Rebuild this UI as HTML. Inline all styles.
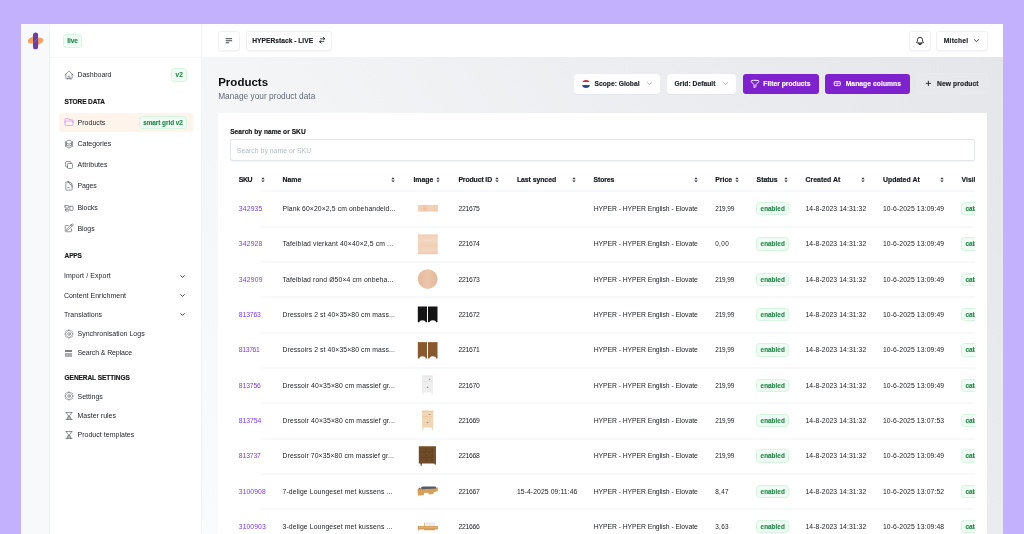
<!DOCTYPE html>
<html lang="en"><head><meta charset="utf-8"><title>Products</title>
<style>
*{box-sizing:border-box;margin:0;padding:0}
html,body{width:1024px;height:534px;overflow:hidden}
body{background:#c4b1fe;font-family:"Liberation Sans",sans-serif;color:#1f2328;position:relative;font-size:6.8px;line-height:1}
.abs,.app div,.app svg{position:absolute}
.app{position:absolute;left:21px;top:24px;width:982px;height:510px;background:#fff;overflow:hidden}
/* coordinates inside .page are page coordinates */
.page{left:-21px;top:-24px;width:1024px;height:534px;will-change:transform}
.rail{left:21px;top:24px;width:29px;height:510px;background:#f8f9fb;border-right:1px solid #f1f2f5}
.side{left:50px;top:24px;width:151.5px;height:510px;background:#fff;border-right:1px solid #f1f2f4}
.sidehead{left:50px;top:24px;width:151px;height:33.5px;border-bottom:1px solid #f5f6f7}
.top{left:201.5px;top:24px;width:802px;height:33px;background:#fff}
.main{left:201.5px;top:57px;width:802px;height:477px;background:linear-gradient(58deg,#fafbfc 0%,#e5e6ea 100%)}
.card{left:217.5px;top:112.5px;width:769.5px;height:440px;background:#fff;border-radius:2px}
.btn{background:#fff;border:1px solid #f0f1f4;border-radius:3px;height:19.5px;top:31px;box-shadow:0 0.5px 1px rgba(0,0,0,.03)}
.ab{border-color:#fdfdfe}
.btxt{-webkit-text-stroke:.15px;font-weight:bold;font-size:6.7px;color:#1c1f24;white-space:nowrap;line-height:8px}
.nav{font-size:7px;color:#24272d;white-space:nowrap;line-height:9px;left:77.5px}
.sec{-webkit-text-stroke:.15px;font-size:6.5px;font-weight:bold;color:#15171a;white-space:nowrap;line-height:8px;left:64.6px;letter-spacing:.05px}
.ico{left:63.7px;width:10px;height:10px}
.ico path,.ico rect,.ico circle{fill:none;stroke:#4d5158;stroke-width:1.45;stroke-linecap:round;stroke-linejoin:round}
.chev{left:178.7px;width:7px;height:7px}
.gb{-webkit-text-stroke:.12px;background:#effcf4;border:1px solid #d6f5e0;border-radius:3.5px;color:#25864a;font-weight:bold;white-space:nowrap;text-align:center}
.th{top:175.9px;-webkit-text-stroke:.18px #17191d;font-weight:bold;font-size:6.9px;line-height:8px;color:#17191d;white-space:nowrap}
.sw{top:175.6px;width:4px;height:8px}
.so{left:0;top:0;width:4px;height:8px}
.tbl{left:230px;top:165px;width:744.7px;height:380px;overflow:hidden}
.tin{left:-230px;top:-165px;width:1024px;height:600px}
.tr{left:0;width:1024px;height:35.3px}
.ln{left:258px;top:-0.9px;width:720px;height:2px;background:linear-gradient(to right,rgba(247,248,250,0),#f7f8fa 8px)}
.td{top:13.7px;font-size:6.8px;line-height:8px;color:#1b1d21;white-space:nowrap}
.td.sku{color:#7c3aed}
.td.pr{font-size:6.4px}
.pi{left:412px;top:0;width:32px;height:35.3px}
.bd{-webkit-text-stroke:.12px;top:10.6px;height:13.6px;background:#effcf4;border:1px solid #d6f5e0;border-radius:3.5px;color:#25864a;font-weight:bold;font-size:6.3px;line-height:11.7px;white-space:nowrap;padding:0 3.3px}
</style></head>
<body>
<div class="app"><div class="page">
<div class="rail"></div>
<div class="side"></div>
<div class="sidehead"></div>
<div class="top"></div>
<div class="main"></div>

<!-- logo -->
<svg style="left:24px;top:28px;width:24px;height:26px" viewBox="24 28 24 26">
<path d="M33.6 35.9 L29.3 38.45 A2.7 2.7 0 0 0 30.4 43.6 L33.6 43.5 Z" fill="#f6a264"></path>
<path d="M37.5 45.3 L41.8 42.7 A2.65 2.65 0 0 0 40.7 37.65 L37.5 37.75 Z" fill="#f6a264"></path>
<rect x="33" y="32.5" width="5.1" height="16.7" rx="2.55" fill="#6c3e9f"></rect>
<path d="M33.5 43.1 L37.7 38.4" stroke="#fff" stroke-opacity=".38" stroke-width=".55" fill="none"></path>
</svg>

<!-- sidebar -->
<div class="gb" style="left: 63.1px; top: 34.1px; width: 18.9px; height: 13.6px; font-size: 6.6px; line-height: 11.5px; letter-spacing: -0.075px;">live</div>

<svg class="ico" style="top:69.75px" viewBox="0 0 24 24"><path d="m2.25 12 8.954-8.955c.44-.439 1.152-.439 1.591 0L21.75 12M4.5 9.75v10.125c0 .621.504 1.125 1.125 1.125H9.75v-4.875c0-.621.504-1.125 1.125-1.125h2.25c.621 0 1.125.504 1.125 1.125V21h4.125c.621 0 1.125-.504 1.125-1.125V9.750M8.25 21h8.25"></path></svg>
<div class="nav" style="top: 69.9px; letter-spacing: -0.039px;">Dashboard</div>
<div class="gb" style="left: 171.2px; top: 68px; width: 16px; height: 13.7px; font-size: 6.4px; line-height: 11.5px; letter-spacing: 0.195px;">v2</div>

<div class="sec" style="top: 98px; letter-spacing: -0.097px;">STORE DATA</div>

<div style="left:58.5px;top:113px;width:134px;height:18.7px;background:#fef4ec;border-radius:3px"></div>
<svg class="ico" style="top:117.3px" viewBox="0 0 24 24"><path style="stroke:#c084fc" d="M2.25 12.75V12A2.25 2.25 0 0 1 4.5 9.75h15A2.25 2.25 0 0 1 21.75 12v.75m-8.69-6.440-2.120-2.120a1.5 1.5 0 0 0-1.061-.44H4.5A2.25 2.25 0 0 0 2.25 6v12a2.25 2.25 0 0 0 2.25 2.25h15A2.25 2.25 0 0 0 21.75 18V9a2.25 2.25 0 0 0-2.25-2.25h-5.379a1.5 1.5 0 0 1-1.060-.44Z"></path></svg>
<div class="nav" style="top: 117.6px; letter-spacing: 0.034px;">Products</div>
<div class="gb" style="left: 138.8px; top: 115.8px; width: 48.4px; height: 13.5px; font-size: 6.4px; line-height: 11.5px; letter-spacing: -0.042px;">smart grid v2</div>

<svg class="ico" style="top:138.55px" viewBox="0 0 24 24"><path d="M6.429 9.75 2.25 12l4.179 2.25m0-4.5 5.571 3 5.571-3m-11.142 0L2.25 7.5 12 2.25l9.75 5.25-4.179 2.25m0 0L21.75 12l-4.179 2.25m0 0 4.179 2.25L12 21.75 2.25 16.5l4.179-2.25m11.142 0-5.571 3-5.571-3"></path></svg>
<div class="nav" style="top: 138.9px; letter-spacing: -0.016px;">Categories</div>
<svg class="ico" style="top:159.5px" viewBox="0 0 24 24"><path d="M16.5 8.25V6a2.25 2.25 0 0 0-2.25-2.25H6A2.25 2.25 0 0 0 3.75 6v8.25A2.25 2.25 0 0 0 6 16.5h2.25m8.25-8.25H18a2.25 2.25 0 0 1 2.25 2.25V18A2.25 2.25 0 0 1 18 20.25h-7.5A2.25 2.25 0 0 1 8.25 18v-1.5m8.25-8.25h-6a2.25 2.25 0 0 0-2.25 2.25v6"></path></svg>
<div class="nav" style="top: 160.1px; letter-spacing: 0.052px;">Attributes</div>
<svg class="ico" style="top:181px" viewBox="0 0 24 24"><path d="M19.5 14.25v-2.625a3.375 3.375 0 0 0-3.375-3.375h-1.5A1.125 1.125 0 0 1 13.5 7.125v-1.5a3.375 3.375 0 0 0-3.375-3.375H8.25m4.5 13.5H9m1.5-13.5H5.625c-.621 0-1.125.504-1.125 1.125v17.25c0 .621.504 1.125 1.125 1.125h12.75c.621 0 1.125-.504 1.125-1.125V11.25a9 9 0 0 0-9-9Z"></path></svg>
<div class="nav" style="top: 181.4px; letter-spacing: -0.152px;">Pages</div>
<svg class="ico" style="top:202.8px" viewBox="0 0 24 24"><path d="M2.25 7.125C2.25 6.504 2.754 6 3.375 6h6c.621 0 1.125.504 1.125 1.125v3.75c0 .621-.504 1.125-1.125 1.125h-6a1.125 1.125 0 0 1-1.125-1.125v-3.75ZM14.25 8.625c0-.621.504-1.125 1.125-1.125h5.250c.621 0 1.125.504 1.125 1.125v8.25c0 .621-.504 1.125-1.125 1.125h-5.250a1.125 1.125 0 0 1-1.125-1.125v-8.25ZM3.75 16.125c0-.621.504-1.125 1.125-1.125h5.250c.621 0 1.125.504 1.125 1.125v2.25c0 .621-.504 1.125-1.125 1.125h-5.250a1.125 1.125 0 0 1-1.125-1.125v-2.25Z"></path></svg>
<div class="nav" style="top: 202.7px; letter-spacing: -0.071px;">Blocks</div>
<svg class="ico" style="top:223.35px" viewBox="0 0 24 24"><path d="m16.862 4.487 1.687-1.688a1.875 1.875 0 1 1 2.652 2.652L10.582 16.070a4.5 4.5 0 0 1-1.897 1.130L6 18l.8-2.685a4.5 4.5 0 0 1 1.130-1.897l8.932-8.931Zm0 0L19.5 7.125M18 14v4.750A2.250 2.250 0 0 1 15.750 21H5.250A2.250 2.250 0 0 1 3 18.750V8.250A2.250 2.250 0 0 1 5.250 6H10"></path></svg>
<div class="nav" style="top: 223.9px; letter-spacing: -0.083px;">Blogs</div>

<div class="sec" style="top: 251.5px; letter-spacing: -0.127px;">APPS</div>
<div class="nav" style="left: 63.9px; top: 271.4px; letter-spacing: 0.066px;">Import / Export</div>
<svg class="chev" style="top:272.6px" viewBox="0 0 14 14"><path d="M3.5 5.3 L7 8.8 L10.5 5.3" fill="none" stroke="#22252a" stroke-width="1.8" stroke-linecap="round" stroke-linejoin="round"></path></svg>
<div class="nav" style="left: 63.9px; top: 290.6px; letter-spacing: 0.013px;">Content Enrichment</div>
<svg class="chev" style="top:291.8px" viewBox="0 0 14 14"><path d="M3.5 5.3 L7 8.8 L10.5 5.3" fill="none" stroke="#22252a" stroke-width="1.8" stroke-linecap="round" stroke-linejoin="round"></path></svg>
<div class="nav" style="left: 63.9px; top: 309.7px; letter-spacing: 0.027px;">Translations</div>
<svg class="chev" style="top:310.9px" viewBox="0 0 14 14"><path d="M3.5 5.3 L7 8.8 L10.5 5.3" fill="none" stroke="#22252a" stroke-width="1.8" stroke-linecap="round" stroke-linejoin="round"></path></svg>

<svg class="ico" style="top:328.85px" viewBox="0 0 24 24"><path d="M10.33 2.44 L13.67 2.44 L14.06 4.48 L15.86 5.22 L17.58 4.06 L19.94 6.42 L18.78 8.14 L19.52 9.94 L21.56 10.33 L21.56 13.67 L19.52 14.06 L18.78 15.86 L19.94 17.58 L17.58 19.94 L15.86 18.78 L14.06 19.52 L13.67 21.56 L10.33 21.56 L9.94 19.52 L8.14 18.78 L6.42 19.94 L4.06 17.58 L5.22 15.86 L4.48 14.06 L2.44 13.67 L2.44 10.33 L4.48 9.94 L5.22 8.14 L4.06 6.42 L6.42 4.06 L8.14 5.22 L9.94 4.48 Z"></path><circle cx="12" cy="12" r="3.1"></circle></svg>
<div class="nav" style="top: 329.1px; letter-spacing: 0.013px;">Synchronisation Logs</div>
<div style="left:64.9px;top:349.6px;width:7.2px;height:2.2px;background:#7e8084"></div><div style="left:64.9px;top:352.8px;width:7.2px;height:1.9px;background:#a9abae"></div><div style="left:64.9px;top:355.1px;width:7.2px;height:1.9px;background:#adafb2"></div>
<div class="nav" style="top: 348.2px; letter-spacing: -0.12px;">Search &amp; Replace</div>

<div class="sec" style="top: 373.5px; letter-spacing: -0.049px;">GENERAL SETTINGS</div>
<svg class="ico" style="top:391.3px" viewBox="0 0 24 24"><path d="M10.33 2.44 L13.67 2.44 L14.06 4.48 L15.86 5.22 L17.58 4.06 L19.94 6.42 L18.78 8.14 L19.52 9.94 L21.56 10.33 L21.56 13.67 L19.52 14.06 L18.78 15.86 L19.94 17.58 L17.58 19.94 L15.86 18.78 L14.06 19.52 L13.67 21.56 L10.33 21.56 L9.94 19.52 L8.14 18.78 L6.42 19.94 L4.06 17.58 L5.22 15.86 L4.48 14.06 L2.44 13.67 L2.44 10.33 L4.48 9.94 L5.22 8.14 L4.06 6.42 L6.42 4.06 L8.14 5.22 L9.94 4.48 Z"></path><circle cx="12" cy="12" r="3.1"></circle></svg>
<div class="nav" style="top: 391.7px; letter-spacing: 0px;">Settings</div>
<svg class="ico" style="top:410.75px" viewBox="0 0 24 24"><path d="M6.5 20.2 L9.3 14.6 H14.7 L17.5 20.2 Z" style="fill:#b9bbbf;stroke:none"></path><path d="M4.5 3.75 H19.5 M6.2 3.75 C6.2 8.6 9.4 10.4 12 12 C14.6 10.4 17.8 8.6 17.8 3.75 M4.5 20.25 H19.5 M6.6 20.25 L10 13.4 M17.4 20.25 L14 13.4 M10 13.4 L12 12 L14 13.4"></path></svg>
<div class="nav" style="top: 410.9px; letter-spacing: -0.001px;">Master rules</div>
<svg class="ico" style="top:429.95px" viewBox="0 0 24 24"><path d="M6.5 20.2 L9.3 14.6 H14.7 L17.5 20.2 Z" style="fill:#b9bbbf;stroke:none"></path><path d="M4.5 3.75 H19.5 M6.2 3.75 C6.2 8.6 9.4 10.4 12 12 C14.6 10.4 17.8 8.6 17.8 3.75 M4.5 20.25 H19.5 M6.6 20.25 L10 13.4 M17.4 20.25 L14 13.4 M10 13.4 L12 12 L14 13.4"></path></svg>
<div class="nav" style="top: 430px; letter-spacing: 0.022px;">Product templates</div>

<!-- top bar -->
<div class="btn" style="left:218px;width:21.5px"></div>
<svg style="left:225px;top:37px;width:8px;height:7px" viewBox="0 0 8 7"><path d="M0.7 1.7 H7.1 M0.7 3.75 H7.1 M0.7 5.8 H4.1" fill="none" stroke="#3a3d43" stroke-width=".95"></path></svg>
<div class="btn" style="left:245.6px;width:86.9px"></div>
<div class="btxt" style="left: 252.3px; top: 36.8px; letter-spacing: -0.009px;">HYPERstack - LIVE</div>
<svg style="left:317.8px;top:36px;width:8.4px;height:8.4px" viewBox="0 0 24 24"><path d="M7 8 H19 M15.5 4 L19.5 8 M17 16 H5 M8.5 20 L4.5 16 M15.5 4 L19.5 8 L15.5 11 M8.5 13 L4.5 16 L8.5 20" fill="none" stroke="#1c1f24" stroke-width="2.2" stroke-linecap="round" stroke-linejoin="round"></path></svg>

<div class="btn" style="left:909px;width:21.5px"></div>
<svg style="left:914.5px;top:35.7px;width:10px;height:10px" viewBox="0 0 24 24"><path d="M14.857 17.082a23.848 23.848 0 0 0 5.454-1.31A8.967 8.967 0 0 1 18 9.75V9A6 6 0 0 0 6 9v.75a8.967 8.967 0 0 1-2.312 6.022c1.733.64 3.56 1.085 5.455 1.31m5.714 0a24.255 24.255 0 0 1-5.714 0m5.714 0a3 3 0 1 1-5.714 0" fill="none" stroke="#15171a" stroke-width="2.1" stroke-linejoin="round" stroke-linecap="round"></path></svg>
<div class="btn" style="left:936.3px;width:51.3px"></div>
<div class="btxt" style="left: 943.8px; top: 36.8px; letter-spacing: 0.208px;">Mitchel</div>
<svg style="left:973.4px;top:37px;width:7px;height:7px" viewBox="0 0 14 14"><path d="M2.6 5.2 L7 9.3 L11.4 5.2" fill="none" stroke="#2c2f35" stroke-width="1.8" stroke-linecap="round" stroke-linejoin="round"></path></svg>

<!-- title -->
<div style="left: 218.2px; top: 76px; font-size: 11.5px; line-height: 13px; font-weight: bold; color: rgb(11, 12, 14); white-space: nowrap; letter-spacing: 0.006px;">Products</div>
<div style="left: 218.2px; top: 90.8px; font-size: 8.3px; line-height: 10px; color: rgb(100, 107, 120); white-space: nowrap; letter-spacing: 0.009px;">Manage your product data</div>

<!-- actions -->
<div class="btn ab" style="left:574.4px;top:73.6px;width:85.8px;height:20px"></div>
<div style="left:582.3px;top:79.7px;width:8px;height:8px;border-radius:50%;overflow:hidden;background:#fff">
<div style="left:0;top:0;width:8px;height:2.8px;background:#c8313e"></div>
<div style="left:0;top:5.2px;width:8px;height:2.8px;background:#2d4b8f"></div></div>
<div class="btxt" style="left: 594.6px; top: 79.9px; letter-spacing: -0.005px;">Scope: Global</div>
<svg style="left:645.6px;top:80.3px;width:7px;height:7px" viewBox="0 0 14 14"><path d="M3 5.3 L7 9 L11 5.3" fill="none" stroke="#8a8f98" stroke-width="1.4" stroke-linecap="round" stroke-linejoin="round"></path></svg>

<div class="btn ab" style="left:666.6px;top:73.6px;width:69.7px;height:20px"></div>
<div class="btxt" style="left: 674.6px; top: 79.9px; letter-spacing: 0.031px;">Grid: Default</div>
<svg style="left:721.9px;top:80.3px;width:7px;height:7px" viewBox="0 0 14 14"><path d="M3 5.3 L7 9 L11 5.3" fill="none" stroke="#8a8f98" stroke-width="1.4" stroke-linecap="round" stroke-linejoin="round"></path></svg>

<div style="left:742.8px;top:73.6px;width:76px;height:20.3px;background:#7e22ce;border-radius:3px"></div>
<svg style="left:750.1px;top:78.7px;width:10px;height:10px" viewBox="0 0 24 24"><path d="M12 3c2.755 0 5.455.232 8.083.678.533.09.917.556.917 1.096v1.044a2.25 2.25 0 0 1-.659 1.591l-5.432 5.432a2.25 2.25 0 0 0-.659 1.591v2.927a2.25 2.25 0 0 1-1.244 2.013L9.75 21v-6.568a2.25 2.25 0 0 0-.659-1.591L3.659 7.409A2.25 2.25 0 0 1 3 5.818V4.774c0-.54.384-1.006.917-1.096A48.32 48.32 0 0 1 12 3Z" fill="none" stroke="#fff" stroke-width="2.3" stroke-linejoin="round"></path></svg>
<div class="btxt" style="left: 763.3px; top: 79.9px; color: rgb(255, 255, 255); letter-spacing: 0.025px;">Filter products</div>

<div style="left:825px;top:73.6px;width:85px;height:20.3px;background:#7e22ce;border-radius:3px"></div>
<svg style="left:832px;top:79px;width:10px;height:10px" viewBox="832 79 10 10"><rect x="834.2" y="81.5" width="6.1" height="4.1" rx=".7" fill="none" stroke="#fff" stroke-width=".85"></rect><path d="M834.2 83.1 H840.3 M837.25 83.1 V85.6" stroke="#fff" stroke-width=".7" fill="none"></path></svg>
<div class="btxt" style="left: 845.7px; top: 79.9px; color: rgb(255, 255, 255); letter-spacing: 0.081px;">Manage columns</div>

<div style="left:916.6px;top:73.3px;width:71px;height:20.4px;background:rgba(255,255,255,.07);border:1px solid rgba(255,255,255,.08);border-radius:3px"></div>
<svg style="left:925.4px;top:80.1px;width:6.8px;height:6.8px" viewBox="0 0 12 12"><path d="M6 1.4 V10.6 M1.4 6 H10.6" stroke="#1c1f24" stroke-width="1.55" fill="none"></path></svg>
<div class="btxt" style="left: 937px; top: 79.9px; letter-spacing: 0.109px;">New product</div>

<!-- card -->
<div class="card"></div>
<div style="left: 230.2px; top: 127.7px; font-size: 6.6px; line-height: 8px; font-weight: bold; -webkit-text-stroke: 0.15px; color: rgb(19, 21, 24); white-space: nowrap; letter-spacing: 0.035px;">Search by name or SKU</div>
<div style="left:230.3px;top:139.2px;width:744.4px;height:21.7px;border:1px solid #e3e6ea;border-radius:2.5px;background:#fff;box-shadow:0 .5px 1px rgba(0,0,0,.05)"></div>
<div style="left: 236.8px; top: 147px; font-size: 6.8px; line-height: 8px; color: rgb(178, 185, 198); white-space: nowrap; letter-spacing: 0.048px;">Search by name or SKU</div>

<div class="tbl"><div class="tin">
<div class="th" style="left: 238.8px; letter-spacing: -0.421px;">SKU</div><div class="sw" style="left:260.9px"><svg class="so" viewBox="0 0 4 8"><path d="M0.35 3.2 L2 1.25 L3.65 3.2 Z M0.35 4.4 L2 6.35 L3.65 4.4 Z" fill="#2e3136"></path></svg></div><div class="th" style="left: 282.5px; letter-spacing: 0.005px;">Name</div><div class="sw" style="left:391.0px"><svg class="so" viewBox="0 0 4 8"><path d="M0.35 3.2 L2 1.25 L3.65 3.2 Z M0.35 4.4 L2 6.35 L3.65 4.4 Z" fill="#2e3136"></path></svg></div><div class="th" style="left: 413.4px; letter-spacing: -0.004px;">Image</div><div class="sw" style="left:436.0px"><svg class="so" viewBox="0 0 4 8"><path d="M0.35 3.2 L2 1.25 L3.65 3.2 Z M0.35 4.4 L2 6.35 L3.65 4.4 Z" fill="#2e3136"></path></svg></div><div class="th" style="left: 458.4px; letter-spacing: -0.124px;">Product ID</div><div class="sw" style="left:495.4px"><svg class="so" viewBox="0 0 4 8"><path d="M0.35 3.2 L2 1.25 L3.65 3.2 Z M0.35 4.4 L2 6.35 L3.65 4.4 Z" fill="#2e3136"></path></svg></div><div class="th" style="left: 516.9px; letter-spacing: -0.059px;">Last synced</div><div class="sw" style="left:571.9px"><svg class="so" viewBox="0 0 4 8"><path d="M0.35 3.2 L2 1.25 L3.65 3.2 Z M0.35 4.4 L2 6.35 L3.65 4.4 Z" fill="#2e3136"></path></svg></div><div class="th" style="left: 593.5px; letter-spacing: -0.109px;">Stores</div><div class="sw" style="left:693.6px"><svg class="so" viewBox="0 0 4 8"><path d="M0.35 3.2 L2 1.25 L3.65 3.2 Z M0.35 4.4 L2 6.35 L3.65 4.4 Z" fill="#2e3136"></path></svg></div><div class="th" style="left: 715.2px; letter-spacing: 0.008px;">Price</div><div class="sw" style="left:734.8px"><svg class="so" viewBox="0 0 4 8"><path d="M0.35 3.2 L2 1.25 L3.65 3.2 Z M0.35 4.4 L2 6.35 L3.65 4.4 Z" fill="#2e3136"></path></svg></div><div class="th" style="left: 756.6px; letter-spacing: -0.027px;">Status</div><div class="sw" style="left:783.9px"><svg class="so" viewBox="0 0 4 8"><path d="M0.35 3.2 L2 1.25 L3.65 3.2 Z M0.35 4.4 L2 6.35 L3.65 4.4 Z" fill="#2e3136"></path></svg></div><div class="th" style="left: 805.6px; letter-spacing: 0.011px;">Created At</div><div class="sw" style="left:861.3px"><svg class="so" viewBox="0 0 4 8"><path d="M0.35 3.2 L2 1.25 L3.65 3.2 Z M0.35 4.4 L2 6.35 L3.65 4.4 Z" fill="#2e3136"></path></svg></div><div class="th" style="left: 883px; letter-spacing: 0.02px;">Updated At</div><div class="sw" style="left:939.5px"><svg class="so" viewBox="0 0 4 8"><path d="M0.35 3.2 L2 1.25 L3.65 3.2 Z M0.35 4.4 L2 6.35 L3.65 4.4 Z" fill="#2e3136"></path></svg></div><div class="th" style="left:961.6px">Visibility</div>
<div class="tr" style="top:191.30px">
<div class="ln"></div>
<div class="td sku" style="left: 238.8px; letter-spacing: 0.169px;">342935</div>
<div class="td" style="left: 282.5px; letter-spacing: 0.115px;">Plank 60×20×2,5 cm onbehandeld...</div>
<svg class="pi" viewBox="0 0 32 35.3"><defs><linearGradient id="w1" x1="0" x2="1"><stop offset="0" stop-color="#f3d5bd"></stop><stop offset=".35" stop-color="#eec7a8"></stop><stop offset=".6" stop-color="#f2d2b8"></stop><stop offset="1" stop-color="#efcbad"></stop></linearGradient></defs><rect x="5.9" y="13.9" width="19.9" height="6.7" fill="url(#w1)"></rect><rect x="11" y="17.7" width="4" height=".6" fill="#e3b48f" opacity=".45"></rect></svg>
<div class="td" style="left: 458.4px; letter-spacing: -0.281px;">221675</div>
<div class="td" style="left:516.9px"></div>
<div class="td" style="left: 593.7px; letter-spacing: -0.057px;">HYPER - HYPER English - Elovate</div>
<div class="td pr" style="left: 715.2px; letter-spacing: -0.091px;">219,99</div>
<div class="bd en" style="left:756.3px"><span style="letter-spacing: 0.058px;">enabled</span></div>
<div class="td" style="left: 805.5px; letter-spacing: 0.081px;">14-8-2023 14:31:32</div>
<div class="td" style="left: 882.9px; letter-spacing: 0.109px;">10-6-2025 13:09:49</div>
<div class="bd cat" style="left:961.1px">catalog, search</div>
</div>
<div class="tr" style="top:226.63px">
<div class="ln"></div>
<div class="td sku" style="left: 238.8px; letter-spacing: 0.169px;">342928</div>
<div class="td" style="left: 282.5px; letter-spacing: 0.14px;">Tafelblad vierkant 40×40×2,5 cm ...</div>
<svg class="pi" viewBox="0 0 32 35.3"><defs><linearGradient id="w2" x1="0" x2="0" y1="0" y2="1"><stop offset="0" stop-color="#f0ceb3"></stop><stop offset=".3" stop-color="#f3d8c2"></stop><stop offset=".55" stop-color="#efcfb5"></stop><stop offset=".8" stop-color="#f3d6bf"></stop><stop offset="1" stop-color="#eecbb0"></stop></linearGradient></defs><rect x="5.9" y="7.4" width="19.9" height="19.8" fill="url(#w2)"></rect></svg>
<div class="td" style="left: 458.4px; letter-spacing: -0.281px;">221674</div>
<div class="td" style="left:516.9px"></div>
<div class="td" style="left: 593.7px; letter-spacing: -0.057px;">HYPER - HYPER English - Elovate</div>
<div class="td pr" style="left: 715.2px; letter-spacing: 0.362px;">0,00</div>
<div class="bd en" style="left:756.3px"><span style="letter-spacing: 0.058px;">enabled</span></div>
<div class="td" style="left: 805.5px; letter-spacing: 0.081px;">14-8-2023 14:31:32</div>
<div class="td" style="left: 882.9px; letter-spacing: 0.109px;">10-6-2025 13:09:49</div>
<div class="bd cat" style="left:961.1px">catalog, search</div>
</div>
<div class="tr" style="top:261.96px">
<div class="ln"></div>
<div class="td sku" style="left: 238.8px; letter-spacing: 0.219px;">342909</div>
<div class="td" style="left: 282.5px; letter-spacing: 0.14px;">Tafelblad rond Ø50×4 cm onbeha...</div>
<svg class="pi" viewBox="0 0 32 35.3"><defs><linearGradient id="w3" x1="0" x2="1"><stop offset="0" stop-color="#e6b99d"></stop><stop offset=".5" stop-color="#ebc5ab"></stop><stop offset="1" stop-color="#e5b89c"></stop></linearGradient></defs><circle cx="15.7" cy="17.1" r="9.9" fill="url(#w3)"></circle></svg>
<div class="td" style="left: 458.4px; letter-spacing: -0.281px;">221673</div>
<div class="td" style="left:516.9px"></div>
<div class="td" style="left: 593.7px; letter-spacing: -0.057px;">HYPER - HYPER English - Elovate</div>
<div class="td pr" style="left: 715.2px; letter-spacing: -0.091px;">219,99</div>
<div class="bd en" style="left:756.3px"><span style="letter-spacing: 0.058px;">enabled</span></div>
<div class="td" style="left: 805.5px; letter-spacing: 0.081px;">14-8-2023 14:31:32</div>
<div class="td" style="left: 882.9px; letter-spacing: 0.109px;">10-6-2025 13:09:49</div>
<div class="bd cat" style="left:961.1px">catalog, search</div>
</div>
<div class="tr" style="top:297.29px">
<div class="ln"></div>
<div class="td sku" style="left: 238.8px; letter-spacing: -0.115px;">813763</div>
<div class="td" style="left: 282.5px; letter-spacing: 0.109px;">Dressoirs 2 st 40×35×80 cm mass...</div>
<svg class="pi" viewBox="0 0 32 35.3"><path d="M5.8 9.6 H15 V25.2 H13.6 L13.2 23.9 Q10.4 22.6 7.8 23.9 L7.4 25.2 H5.8 Z M16 9.6 H25.5 V25.2 H24 L23.6 23.9 Q20.8 22.6 18 23.9 L17.6 25.2 H16 Z" fill="#151515"></path></svg>
<div class="td" style="left: 458.4px; letter-spacing: -0.281px;">221672</div>
<div class="td" style="left:516.9px"></div>
<div class="td" style="left: 593.7px; letter-spacing: -0.057px;">HYPER - HYPER English - Elovate</div>
<div class="td pr" style="left: 715.2px; letter-spacing: -0.091px;">219,99</div>
<div class="bd en" style="left:756.3px"><span style="letter-spacing: 0.058px;">enabled</span></div>
<div class="td" style="left: 805.5px; letter-spacing: 0.081px;">14-8-2023 14:31:32</div>
<div class="td" style="left: 882.9px; letter-spacing: 0.109px;">10-6-2025 13:09:49</div>
<div class="bd cat" style="left:961.1px">catalog, search</div>
</div>
<div class="tr" style="top:332.62px">
<div class="ln"></div>
<div class="td sku" style="left: 238.8px; letter-spacing: -0.331px;">813761</div>
<div class="td" style="left: 282.5px; letter-spacing: 0.109px;">Dressoirs 2 st 40×35×80 cm mass...</div>
<svg class="pi" viewBox="0 0 32 35.3"><path d="M5.8 9.2 H15 V25.6 H13.6 L13.2 24 Q10.4 22.7 7.8 24 L7.4 25.6 H5.8 Z M16 9.2 H25.5 V25.6 H24 L23.6 24 Q20.8 22.7 18 24 L17.6 25.6 H16 Z" fill="#87592f"></path><path d="M5.8 9.2 H15 V10 H5.8 Z M16 9.2 H25.5 V10 H16 Z" fill="#9a6a3a"></path></svg>
<div class="td" style="left: 458.4px; letter-spacing: -0.281px;">221671</div>
<div class="td" style="left:516.9px"></div>
<div class="td" style="left: 593.7px; letter-spacing: -0.057px;">HYPER - HYPER English - Elovate</div>
<div class="td pr" style="left: 715.2px; letter-spacing: -0.091px;">219,99</div>
<div class="bd en" style="left:756.3px"><span style="letter-spacing: 0.058px;">enabled</span></div>
<div class="td" style="left: 805.5px; letter-spacing: 0.081px;">14-8-2023 14:31:32</div>
<div class="td" style="left: 882.9px; letter-spacing: 0.109px;">10-6-2025 13:09:49</div>
<div class="bd cat" style="left:961.1px">catalog, search</div>
</div>
<div class="tr" style="top:367.95px">
<div class="ln"></div>
<div class="td sku" style="left: 238.8px; letter-spacing: -0.115px;">813756</div>
<div class="td" style="left: 282.5px; letter-spacing: 0.153px;">Dressoir 40×35×80 cm massief gr...</div>
<svg class="pi" viewBox="0 0 32 35.3"><path d="M10 7.6 H21 V24.4 L20.5 26.8 H19.7 L19.3 24.4 H11.7 L11.3 26.8 H10.5 L10 24.4 Z" fill="#efeeee"></path><rect x="10" y="7.6" width="11" height="1" fill="#e6e4e4"></rect><rect x="10.6" y="13.2" width="9.8" height=".5" fill="#dddada"></rect><rect x="16.8" y="10.8" width="1.5" height="1.1" fill="#8f8a8a"></rect><rect x="14.8" y="18.8" width="1.5" height="1.1" fill="#8f8a8a"></rect></svg>
<div class="td" style="left: 458.4px; letter-spacing: -0.281px;">221670</div>
<div class="td" style="left:516.9px"></div>
<div class="td" style="left: 593.7px; letter-spacing: -0.057px;">HYPER - HYPER English - Elovate</div>
<div class="td pr" style="left: 715.2px; letter-spacing: -0.091px;">219,99</div>
<div class="bd en" style="left:756.3px"><span style="letter-spacing: 0.058px;">enabled</span></div>
<div class="td" style="left: 805.5px; letter-spacing: 0.081px;">14-8-2023 14:31:32</div>
<div class="td" style="left: 882.9px; letter-spacing: 0.109px;">10-6-2025 13:09:49</div>
<div class="bd cat" style="left:961.1px">catalog, search</div>
</div>
<div class="tr" style="top:403.28px">
<div class="ln"></div>
<div class="td sku" style="left: 238.8px; letter-spacing: -0.031px;">813754</div>
<div class="td" style="left: 282.5px; letter-spacing: 0.153px;">Dressoir 40×35×80 cm massief gr...</div>
<svg class="pi" viewBox="0 0 32 35.3"><path d="M10 7.7 H21.3 V24.5 L20.8 26.9 H20 L19.6 24.5 H11.7 L11.3 26.9 H10.5 L10 24.5 Z" fill="#f1d6b6"></path><rect x="10" y="7.7" width="11.3" height="1" fill="#e9c8a2"></rect><rect x="10.6" y="13.3" width="10" height=".5" fill="#e2bd95"></rect><rect x="16.8" y="10.9" width="1.5" height="1.1" fill="#a08a72"></rect><rect x="14.8" y="18.9" width="1.5" height="1.1" fill="#a08a72"></rect></svg>
<div class="td" style="left: 458.4px; letter-spacing: -0.281px;">221669</div>
<div class="td" style="left:516.9px"></div>
<div class="td" style="left: 593.7px; letter-spacing: -0.057px;">HYPER - HYPER English - Elovate</div>
<div class="td pr" style="left: 715.2px; letter-spacing: -0.091px;">219,99</div>
<div class="bd en" style="left:756.3px"><span style="letter-spacing: 0.058px;">enabled</span></div>
<div class="td" style="left: 805.5px; letter-spacing: 0.081px;">14-8-2023 14:31:32</div>
<div class="td" style="left: 882.9px; letter-spacing: 0.109px;">10-6-2025 13:07:53</div>
<div class="bd cat" style="left:961.1px">catalog, search</div>
</div>
<div class="tr" style="top:438.61px">
<div class="ln"></div>
<div class="td sku" style="left: 238.8px; letter-spacing: -0.115px;">813737</div>
<div class="td" style="left: 282.5px; letter-spacing: 0.124px;">Dressoir 70×35×80 cm massief gr...</div>
<svg class="pi" viewBox="0 0 32 35.3"><path d="M6.8 7.4 H24 V24.6 L23.6 25.8 H22.8 V24.6 H10 L9.6 27 H8.8 L8.4 24.6 H6.8 Z" fill="#6f4b28"></path><rect x="6.8" y="7.4" width="17.2" height=".9" fill="#83592f"></rect><rect x="21.6" y="8.3" width="2.4" height="16.3" fill="#7a532d"></rect><path d="M8 13 H21 M8 18.3 H21" stroke="#5d3d1f" stroke-width=".5"></path><path d="M13.5 11 h1.2 M19.5 11 h1.2 M13.5 16 h1.2 M19.5 16 h1.2 M13.5 21.3 h1.2 M19.5 21.3 h1.2" stroke="#4a3320" stroke-width=".7"></path></svg>
<div class="td" style="left: 458.4px; letter-spacing: -0.281px;">221668</div>
<div class="td" style="left:516.9px"></div>
<div class="td" style="left: 593.7px; letter-spacing: -0.057px;">HYPER - HYPER English - Elovate</div>
<div class="td pr" style="left: 715.2px; letter-spacing: -0.091px;">219,99</div>
<div class="bd en" style="left:756.3px"><span style="letter-spacing: 0.058px;">enabled</span></div>
<div class="td" style="left: 805.5px; letter-spacing: 0.081px;">14-8-2023 14:31:32</div>
<div class="td" style="left: 882.9px; letter-spacing: 0.109px;">10-6-2025 13:09:49</div>
<div class="bd cat" style="left:961.1px">catalog, search</div>
</div>
<div class="tr" style="top:473.94px">
<div class="ln"></div>
<div class="td sku" style="left: 238.8px; letter-spacing: 0.076px;">3100908</div>
<div class="td" style="left: 282.5px; letter-spacing: 0.135px;">7-delige Loungeset met kussens ...</div>
<svg class="pi" viewBox="0 0 32 35.3"><path d="M5.5 15 L9 14 L25.8 13.6 V17 L21.5 18.5 V20 L16.5 20.6 V18.7 L12 19 V21 L6 21.7 Z" fill="#d6a05a"></path><path d="M9 13.3 L11 12.5 L23.5 12.4 L24.5 14.6 L9.6 15.3 Z" fill="#55586a"></path><rect x="6.8" y="13.8" width="1.5" height="1.6" fill="#666a7c"></rect></svg>
<div class="td" style="left: 458.4px; letter-spacing: -0.281px;">221667</div>
<div class="td" style="left: 516.9px; letter-spacing: 0.092px;">15-4-2025 09:11:46</div>
<div class="td" style="left: 593.7px; letter-spacing: -0.057px;">HYPER - HYPER English - Elovate</div>
<div class="td pr" style="left: 715.2px; letter-spacing: 0.312px;">8,47</div>
<div class="bd en" style="left:756.3px"><span style="letter-spacing: 0.058px;">enabled</span></div>
<div class="td" style="left: 805.5px; letter-spacing: 0.081px;">14-8-2023 14:31:32</div>
<div class="td" style="left: 882.9px; letter-spacing: 0.109px;">10-6-2025 13:07:52</div>
<div class="bd cat" style="left:961.1px">catalog, search</div>
</div>
<div class="tr" style="top:509.27px">
<div class="ln"></div>
<div class="td sku" style="left: 238.8px; letter-spacing: 0.076px;">3100903</div>
<div class="td" style="left: 282.5px; letter-spacing: 0.135px;">3-delige Loungeset met kussens ...</div>
<svg class="pi" viewBox="0 0 32 35.3"><rect x="12" y="13.4" width="11" height="3.8" fill="#ececec"></rect><rect x="17.3" y="13.6" width=".5" height="3.4" fill="#d9d9d9"></rect><path d="M5.8 17 H25.9 V20.6 H23 V21.2 H12 V20.6 H7.2 V21.2 H5.8 Z" fill="#d4a05d"></path><path d="M7 18.3 H25" stroke="#e9c083" stroke-width=".6"></path><rect x="12" y="13.6" width=".7" height="3.5" fill="#e0a664"></rect></svg>
<div class="td" style="left: 458.4px; letter-spacing: -0.281px;">221666</div>
<div class="td" style="left:516.9px"></div>
<div class="td" style="left: 593.7px; letter-spacing: -0.057px;">HYPER - HYPER English - Elovate</div>
<div class="td pr" style="left: 715.2px; letter-spacing: 0.312px;">3,63</div>
<div class="bd en" style="left:756.3px"><span style="letter-spacing: 0.058px;">enabled</span></div>
<div class="td" style="left: 805.5px; letter-spacing: 0.081px;">14-8-2023 14:31:32</div>
<div class="td" style="left: 882.9px; letter-spacing: 0.109px;">10-6-2025 13:09:48</div>
<div class="bd cat" style="left:961.1px">catalog, search</div>
</div>

</div></div>

</div></div>

</body></html>
